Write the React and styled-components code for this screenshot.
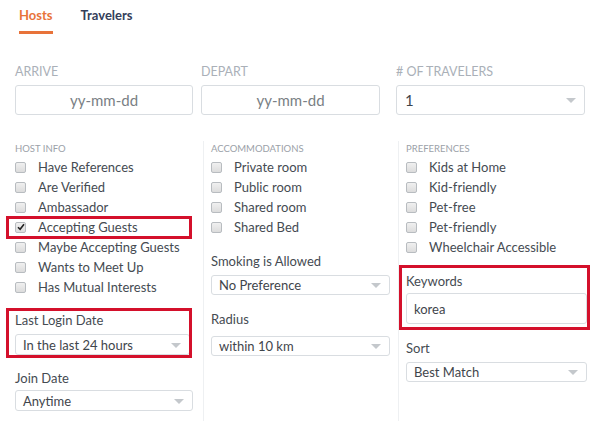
import React from 'react';
import styled, { createGlobalStyle, css } from 'styled-components';

const GlobalStyle = createGlobalStyle`
  body {
    margin: 0;
    background: #fff;
    font-family: Lato, 'Open Sans', Arial, sans-serif;
  }
`;

const Page = styled.div`
  width: 600px;
  height: 421px;
  overflow: hidden;
  padding: 0 0 0 15px;
  box-sizing: border-box;
`;

const Tabs = styled.div`
  display: flex;
  gap: 28px;
  padding-left: 4px;
`;

const Tab = styled.div`
  font-size: 13px;
  font-weight: 700;
  line-height: 16px;
  padding: 7px 0 8px;
  color: ${(p) => (p.active ? '#e8733a' : '#34405a')};
  border-bottom: 3px solid ${(p) => (p.active ? '#e8733a' : 'transparent')};
`;

const TopRow = styled.div`
  display: grid;
  grid-template-columns: 186px 195px 189px;
  margin-top: 30px;
`;

const TopField = styled.div`
  padding-right: ${(p) => p.pr || 0}px;
`;

const CapsLabel = styled.div`
  font-size: 12.5px;
  line-height: 16px;
  text-transform: uppercase;
  color: #aab0b8;
  margin-bottom: 5px;
`;

const DateBox = styled.div`
  height: 30px;
  box-sizing: border-box;
  border: 1px solid #d9dde1;
  border-radius: 3px;
  display: flex;
  align-items: center;
  justify-content: center;
  font-size: 15px;
  color: #7a7f85;
`;

const SelectBox = styled.div`
  position: relative;
  height: ${(p) => p.h || 21}px;
  box-sizing: border-box;
  border: 1px solid #d9dde1;
  border-radius: 3px;
  display: flex;
  align-items: center;
  padding-left: ${(p) => p.pl || 7}px;
  font-size: ${(p) => p.fs || 13}px;
  color: #3f454b;
  margin-right: ${(p) => p.mr || 0}px;
`;

const Arrow = styled.span`
  position: absolute;
  right: 8px;
  top: 50%;
  margin-top: -2px;
  width: 0;
  height: 0;
  border-left: 5px solid transparent;
  border-right: 5px solid transparent;
  border-top: 5px solid #c4c8cc;
`;

const Lower = styled.div`
  display: grid;
  grid-template-columns: 188px 195px 189px;
  margin-top: 26px;
  height: 300px;
`;

const Column = styled.div`
  padding-right: ${(p) => p.pr || 0}px;
  ${(p) =>
    p.divided &&
    css`
      border-left: 1px solid #eef0f2;
      padding-left: 7px;
    `}
`;

const SectionTitle = styled.div`
  font-size: 9.5px;
  line-height: 16px;
  text-transform: uppercase;
  color: #9ba1a8;
`;

const Row = styled.div`
  position: relative;
  display: flex;
  align-items: center;
  height: 20px;
  font-size: 13px;
  color: #454b52;
  ${(p) => p.marked && marker('-1px', '1px', '-2px', '-9px')}
`;

function marker(top, right, bottom, left) {
  return css`
    &::after {
      content: '';
      position: absolute;
      top: ${top};
      right: ${right};
      bottom: ${bottom};
      left: ${left};
      border: 3px solid #d4102b;
      pointer-events: none;
    }
  `;
}

const Box = styled.span`
  width: 11px;
  height: 11px;
  box-sizing: border-box;
  border: 1px solid #b8bcc0;
  border-radius: 2px;
  background: linear-gradient(#f0f0f0, #dcdcdc);
  margin-right: 12px;
  display: flex;
  align-items: center;
  justify-content: center;
`;

const Field = styled.div`
  position: relative;
  margin-top: ${(p) => p.mt || 16}px;
  ${(p) => p.marked && marker(p.mk[0], p.mk[1], p.mk[2], p.mk[3])}
`;

const FieldLabel = styled.div`
  font-size: 13px;
  line-height: 16px;
  color: #454b52;
  margin-bottom: ${(p) => p.mb || 6}px;
`;

const TextInput = styled.div`
  height: 31px;
  box-sizing: border-box;
  border: 1px solid #d9dde1;
  border-radius: 3px;
  display: flex;
  align-items: center;
  padding-left: 7px;
  font-size: 13px;
  color: #3f454b;
`;

function Check({ label, checked, marked }) {
  return (
    <Row marked={marked}>
      <Box>
        {checked && (
          <svg width="8" height="8" viewBox="0 0 8 8">
            <path d="M1 4.2 L3.1 6.3 L7 1.2" fill="none" stroke="#222" strokeWidth="1.6" />
          </svg>
        )}
      </Box>
      {label}
    </Row>
  );
}

function Select({ value, ...rest }) {
  return (
    <SelectBox {...rest}>
      {value}
      <Arrow />
    </SelectBox>
  );
}

export default function App() {
  return (
    <>
      <GlobalStyle />
      <Page>
        <Tabs>
          <Tab active>Hosts</Tab>
          <Tab>Travelers</Tab>
        </Tabs>

        <TopRow>
          <TopField pr={8}>
            <CapsLabel>Arrive</CapsLabel>
            <DateBox>yy-mm-dd</DateBox>
          </TopField>
          <TopField pr={16}>
            <CapsLabel>Depart</CapsLabel>
            <DateBox>yy-mm-dd</DateBox>
          </TopField>
          <TopField>
            <CapsLabel># of Travelers</CapsLabel>
            <Select value="1" h={30} fs={15} pl={8} />
          </TopField>
        </TopRow>

        <Lower>
          <Column pr={10}>
            <SectionTitle>Host Info</SectionTitle>
            <Check label="Have References" />
            <Check label="Are Verified" />
            <Check label="Ambassador" />
            <Check label="Accepting Guests" checked marked />
            <Check label="Maybe Accepting Guests" />
            <Check label="Wants to Meet Up" />
            <Check label="Has Mutual Interests" />
            <Field mt={15} marked mk={['-4px', '1px', '-3px', '-9px']}>
              <FieldLabel>Last Login Date</FieldLabel>
              <Select value="In the last 24 hours" mr={3} />
            </Field>
            <Field mt={15}>
              <FieldLabel mb={4}>Join Date</FieldLabel>
              <Select value="Anytime" />
            </Field>
          </Column>

          <Column divided pr={8}>
            <SectionTitle>Accommodations</SectionTitle>
            <Check label="Private room" />
            <Check label="Public room" />
            <Check label="Shared room" />
            <Check label="Shared Bed" />
            <Field>
              <FieldLabel>Smoking is Allowed</FieldLabel>
              <Select value="No Preference" h={20} />
            </Field>
            <Field mt={16}>
              <FieldLabel mb={9}>Radius</FieldLabel>
              <Select value="within 10 km" h={20} />
            </Field>
          </Column>

          <Column divided>
            <SectionTitle>Preferences</SectionTitle>
            <Check label="Kids at Home" />
            <Check label="Kid-friendly" />
            <Check label="Pet-free" />
            <Check label="Pet-friendly" />
            <Check label="Wheelchair Accessible" />
            <Field mt={16} marked mk={['-8px', '-3px', '-6px', '-7px']}>
              <FieldLabel mb={4}>Keywords</FieldLabel>
              <TextInput>korea</TextInput>
            </Field>
            <Field mt={16}>
              <FieldLabel>Sort</FieldLabel>
              <Select value="Best Match" h={20} />
            </Field>
          </Column>
        </Lower>
      </Page>
    </>
  );
}
